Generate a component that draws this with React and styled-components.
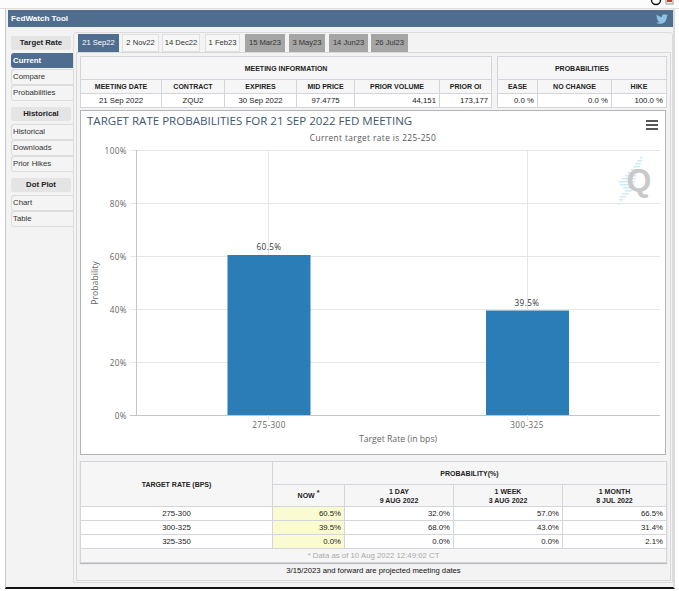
import React from "react";
import styled, { createGlobalStyle } from "styled-components";
import { FaTwitter } from "react-icons/fa";

const GlobalStyle = createGlobalStyle`
  html, body {
    margin: 0;
    padding: 0;
    background: #fff;
    font-family: "Liberation Sans", Arial, sans-serif;
  }
`;

const tabs = [
  { label: "21 Sep22", width: 41, gap: 3, state: "active" },
  { label: "2 Nov22", width: 37, gap: 3 },
  { label: "14 Dec22", width: 38, gap: 5 },
  { label: "1 Feb23", width: 35, gap: 5 },
  { label: "15 Mar23", width: 40, gap: 4, state: "projected" },
  { label: "3 May23", width: 36, gap: 4, state: "projected" },
  { label: "14 Jun23", width: 39, gap: 3, state: "projected" },
  { label: "26 Jul23", width: 37, gap: 0, state: "projected" },
];

const menu = [
  { title: "Target Rate", items: ["Current", "Compare", "Probabilities"] },
  { title: "Historical", items: ["Historical", "Downloads", "Prior Hikes"] },
  { title: "Dot Plot", items: ["Chart", "Table"] },
];

const rates = [
  ["275-300", "60.5%", "32.0%", "57.0%", "66.5%"],
  ["300-325", "39.5%", "68.0%", "43.0%", "31.4%"],
  ["325-350", "0.0%", "0.0%", "0.0%", "2.1%"],
];

const gridLines = [
  { y: 150, label: "100%" },
  { y: 203, label: "80%" },
  { y: 256, label: "60%" },
  { y: 309, label: "40%" },
  { y: 362, label: "20%" },
  { y: 415, label: "0%" },
];

const App = () => {
  return (
    <>
      <GlobalStyle />
      <TopStrip>
        <svg width="24" height="8" viewBox="0 0 24 8">
          <circle cx="6" cy="0" r="4.5" fill="none" stroke="#111" strokeWidth="1.4" />
          <rect x="16" y="-2" width="7" height="6" fill="#f4f4f4" stroke="#999" />
          <rect x="17" y="0" width="5" height="2" fill="#b5482a" />
        </svg>
      </TopStrip>
      <Frame>
        <Header>
          <span>FedWatch Tool</span>
          <FaTwitter size={12} color="#8ec3e6" />
        </Header>
        <Body>
          <Sidebar>
            {menu.map((group) => (
              <MenuGroup key={group.title}>
                <MenuTitle>{group.title}</MenuTitle>
                {group.items.map((item) => (
                  <MenuItem key={item} $active={item === "Current"}>
                    {item}
                  </MenuItem>
                ))}
              </MenuGroup>
            ))}
          </Sidebar>
          <Main>
            <TabRow>
              {tabs.map((tab) => (
                <Tab key={tab.label} $width={tab.width} $gap={tab.gap} $state={tab.state}>
                  {tab.label}
                </Tab>
              ))}
            </TabRow>
            <Panel>
              <InfoRow>
                <InfoTable $width={411}>
                  <colgroup>
                    <Col $width={81} />
                    <Col $width={63} />
                    <Col $width={72} />
                    <Col $width={58} />
                    <Col $width={85} />
                    <Col $width={52} />
                  </colgroup>
                  <tbody>
                    <tr>
                      <HeadCell colSpan={6} $height={23}>MEETING INFORMATION</HeadCell>
                    </tr>
                    <tr>
                      <HeadCell $height={14}>MEETING DATE</HeadCell>
                      <HeadCell>CONTRACT</HeadCell>
                      <HeadCell>EXPIRES</HeadCell>
                      <HeadCell>MID PRICE</HeadCell>
                      <HeadCell>PRIOR VOLUME</HeadCell>
                      <HeadCell>PRIOR OI</HeadCell>
                    </tr>
                    <tr>
                      <Cell $height={14}>21 Sep 2022</Cell>
                      <Cell>ZQU2</Cell>
                      <Cell>30 Sep 2022</Cell>
                      <Cell>97.4775</Cell>
                      <Cell $right>44,151</Cell>
                      <Cell $right>173,177</Cell>
                    </tr>
                  </tbody>
                </InfoTable>
                <InfoTable $width={169}>
                  <colgroup>
                    <Col $width={40} />
                    <Col $width={74} />
                    <Col $width={55} />
                  </colgroup>
                  <tbody>
                    <tr>
                      <HeadCell colSpan={3} $height={23}>PROBABILITIES</HeadCell>
                    </tr>
                    <tr>
                      <HeadCell $height={14}>EASE</HeadCell>
                      <HeadCell>NO CHANGE</HeadCell>
                      <HeadCell>HIKE</HeadCell>
                    </tr>
                    <tr>
                      <Cell $height={14} $right>0.0 %</Cell>
                      <Cell $right>0.0 %</Cell>
                      <Cell $right>100.0 %</Cell>
                    </tr>
                  </tbody>
                </InfoTable>
              </InfoRow>

              <ChartBox>
                <svg width="584" height="343" viewBox="81 111 584 343">
                  <ChartTitle x="87" y="125">TARGET RATE PROBABILITIES FOR 21 SEP 2022 FED MEETING</ChartTitle>
                  <ChartSubtitle x="373" y="141" textAnchor="middle">Current target rate is 225-250</ChartSubtitle>

                  <rect x="646" y="120" width="12" height="2" fill="#555" />
                  <rect x="646" y="124" width="12" height="2" fill="#555" />
                  <rect x="646" y="128" width="12" height="2" fill="#555" />

                  {gridLines.map((line) => (
                    <g key={line.label}>
                      <line x1="130" x2="660" y1={line.y + 0.5} y2={line.y + 0.5} stroke={line.y === 415 ? "#c4c4c4" : "#e6e6e6"} />
                      <AxisText x="127" y={line.y + 4} textAnchor="end">{line.label}</AxisText>
                    </g>
                  ))}
                  <line x1="136.5" x2="136.5" y1="150" y2="415" stroke="#c4c4c4" />
                  <line x1="268.5" x2="268.5" y1="150" y2="420" stroke="#e6e6e6" />
                  <line x1="527.5" x2="527.5" y1="150" y2="420" stroke="#e6e6e6" />

                  <g fill="#cdecf9">
                    <rect x="640" y="157" width="3" height="1.5" />
                    <rect x="637" y="160" width="5" height="1.5" />
                    <rect x="635" y="163" width="6" height="1.5" />
                    <rect x="633" y="166" width="7" height="1.5" />
                    <rect x="631" y="169" width="8" height="1.5" />
                    <rect x="628" y="172" width="10" height="1.5" />
                    <rect x="625" y="175" width="12" height="1.5" />
                    <rect x="622" y="178" width="14" height="1.5" />
                    <rect x="618" y="181" width="17" height="1.5" />
                    <rect x="620" y="184" width="14" height="1.5" />
                    <rect x="623" y="187" width="11" height="1.5" />
                    <rect x="625" y="190" width="7" height="1.5" />
                    <rect x="622" y="193" width="7" height="1.5" />
                    <rect x="620" y="196" width="6" height="1.5" />
                    <rect x="619" y="199" width="4" height="1.5" />
                    <rect x="617" y="203" width="3" height="1.5" />
                  </g>
                  <LogoLetter x="639" y="191" textAnchor="middle">Q</LogoLetter>

                  <rect x="227.5" y="255" width="83" height="160" fill="#2a7db6" />
                  <rect x="486" y="310.5" width="83" height="104.5" fill="#2a7db6" />
                  <AxisText x="269" y="250" textAnchor="middle" $dark>60.5%</AxisText>
                  <AxisText x="527" y="306" textAnchor="middle" $dark>39.5%</AxisText>

                  <AxisText x="269" y="428" textAnchor="middle">275-300</AxisText>
                  <AxisText x="527" y="428" textAnchor="middle">300-325</AxisText>
                  <AxisTitle x="398" y="442" textAnchor="middle">Target Rate (in bps)</AxisTitle>
                  <AxisTitle x="98" y="283" textAnchor="middle" transform="rotate(-90 98 283)">Probability</AxisTitle>
                </svg>
              </ChartBox>

              <RateTable $width={586}>
                <colgroup>
                  <Col $width={192} />
                  <Col $width={72} />
                  <Col $width={109} />
                  <Col $width={109} />
                  <Col $width={104} />
                </colgroup>
                <tbody>
                  <tr>
                    <HeadCell rowSpan={2}>TARGET RATE (BPS)</HeadCell>
                    <HeadCell colSpan={4} $height={23}>PROBABILITY(%)</HeadCell>
                  </tr>
                  <tr>
                    <HeadCell $height={22}>NOW <Star>*</Star></HeadCell>
                    <HeadCell>1 DAY<br />9 AUG 2022</HeadCell>
                    <HeadCell>1 WEEK<br />3 AUG 2022</HeadCell>
                    <HeadCell>1 MONTH<br />8 JUL 2022</HeadCell>
                  </tr>
                  {rates.map(([rate, now, day, week, month]) => (
                    <tr key={rate}>
                      <Cell $height={14}>{rate}</Cell>
                      <Cell $right $now>{now}</Cell>
                      <Cell $right>{day}</Cell>
                      <Cell $right>{week}</Cell>
                      <Cell $right>{month}</Cell>
                    </tr>
                  ))}
                  <tr>
                    <NoteCell colSpan={5}>* Data as of 10 Aug 2022 12:49:02 CT</NoteCell>
                  </tr>
                </tbody>
              </RateTable>
              <Footnote>3/15/2023 and forward are projected meeting dates</Footnote>
            </Panel>
          </Main>
        </Body>
      </Frame>
      <BottomStrip />
    </>
  );
};

const TopStrip = styled.div`
  height: 8px;
  display: flex;
  justify-content: flex-end;
  padding-right: 5px;
  background: #fcfcfc;
  border-bottom: 1px solid #dedede;
  overflow: hidden;
  svg {
    display: block;
  }
`;

const Frame = styled.div`
  width: 670px;
  height: 580px;
  margin-left: 5px;
  padding: 1px 0 0 2px;
  box-sizing: border-box;
  background: #f3f3f3;
  border-left: 1px solid #c8c8c8;
  border-right: 2px solid #dcdcdc;
  border-bottom: 2px solid #111;
`;

const Header = styled.div`
  height: 17px;
  display: flex;
  align-items: center;
  justify-content: space-between;
  padding: 0 5px 0 3px;
  background: #4f6d8f;
  color: #fff;
  font-size: 8.1px;
  font-weight: bold;
`;

const Body = styled.div`
  display: flex;
  padding: 5px 0 0 3px;
`;

const Sidebar = styled.div`
  width: 62px;
  padding-top: 4px;
  flex-shrink: 0;
`;

const MenuGroup = styled.div`
  margin-bottom: 7px;
`;

const MenuTitle = styled.div`
  width: 60px;
  height: 14px;
  margin-bottom: 3px;
  line-height: 14px;
  text-align: center;
  background: #e4e4e4;
  border-radius: 2px;
  color: #222;
  font-size: 7.8px;
  font-weight: bold;
`;

const MenuItem = styled.div`
  height: 15px;
  margin-bottom: 1px;
  padding-left: 2px;
  line-height: 15px;
  font-size: 7.8px;
  border-radius: 3px 0 0 3px;
  background: ${(p) => (p.$active ? "#4f6d8f" : "#f4f4f4")};
  color: ${(p) => (p.$active ? "#fff" : "#333")};
  font-weight: ${(p) => (p.$active ? "bold" : "normal")};
  box-shadow: ${(p) => (p.$active ? "none" : "inset 1px 1px 0 #dcdcdc, 0 1px 0 #dcdcdc")};
`;

const Main = styled.div`
  width: 600px;
  height: 551px;
  box-sizing: border-box;
  padding: 1px 1px 1px 2px;
  border: 1px solid #dcdcdc;
  border-radius: 3px 3px 0 0;
`;

const TabRow = styled.div`
  display: flex;
  height: 18px;
  padding-left: 2px;
`;

const Tab = styled.div`
  width: ${(p) => p.$width}px;
  margin-right: ${(p) => p.$gap}px;
  line-height: 18px;
  text-align: center;
  font-size: 7.6px;
  background: ${(p) =>
    p.$state === "active" ? "#4f6d8f" : p.$state === "projected" ? "#a5a5a5" : "#f7f7f7"};
  color: ${(p) => (p.$state === "active" ? "#fff" : "#333")};
  box-shadow: ${(p) => (p.$state ? "none" : "inset 0 0 0 1px #e0e0e0")};
`;

const Panel = styled.div`
  height: 529px;
  box-sizing: border-box;
  padding: 3px 3px 0 3px;
  border: 1px solid #d8d8d8;
`;

const InfoRow = styled.div`
  display: flex;
  justify-content: space-between;
  width: 587px;
`;

const InfoTable = styled.table`
  width: ${(p) => p.$width}px;
  table-layout: fixed;
  border-collapse: collapse;
`;

const RateTable = styled(InfoTable)`
  margin-top: 6px;
  box-shadow: 0 1px 1px #bbb;
`;

const Col = styled.col`
  width: ${(p) => p.$width}px;
`;

const HeadCell = styled.td`
  box-sizing: border-box;
  height: ${(p) => (p.$height ? `${p.$height}px` : "auto")};
  padding: 0;
  border: 1px solid #d4d4dc;
  background: #f6f6f6;
  color: #222;
  font-size: 7px;
  font-weight: bold;
  line-height: 9px;
  text-align: center;
`;

const Cell = styled.td`
  box-sizing: border-box;
  height: ${(p) => (p.$height ? `${p.$height}px` : "auto")};
  padding: 0 ${(p) => (p.$right ? "3px" : "0")} 0 0;
  border: 1px solid #d4d4dc;
  background: ${(p) => (p.$now ? "#fbfbd2" : "#fff")};
  color: #222;
  font-size: 7.8px;
  line-height: 1;
  text-align: ${(p) => (p.$right ? "right" : "center")};
`;

const NoteCell = styled.td`
  box-sizing: border-box;
  height: 14px;
  padding: 0;
  border: 1px solid #d4d4dc;
  background: #f6f6f6;
  color: #aaa;
  font-size: 7.8px;
  line-height: 1;
  text-align: center;
`;

const Star = styled.sup`
  font-size: 7px;
  line-height: 0;
`;

const ChartBox = styled.div`
  width: 584px;
  height: 343px;
  margin-top: 2px;
  background: #fff;
  border: 1px solid #b4b4b4;
  svg {
    display: block;
  }
`;

const ChartTitle = styled.text`
  fill: #3e576f;
  font-family: "Open Sans", sans-serif;
  font-size: 11.55px;
`;

const ChartSubtitle = styled.text`
  fill: #555;
  font-family: "Open Sans", sans-serif;
  font-size: 8.3px;
  letter-spacing: 0.4px;
`;

const AxisText = styled.text`
  fill: ${(p) => (p.$dark ? "#333" : "#666")};
  font-family: "Open Sans", sans-serif;
  font-size: 8.2px;
  letter-spacing: 0.4px;
`;

const AxisTitle = styled.text`
  fill: #666;
  font-family: "Open Sans", sans-serif;
  font-size: 8.7px;
  letter-spacing: 0;
`;

const LogoLetter = styled.text`
  fill: #c9c9c9;
  font-family: "Liberation Sans", sans-serif;
  font-size: 32px;
  font-weight: bold;
`;

const Footnote = styled.div`
  margin-top: 3px;
  text-align: center;
  color: #111;
  font-size: 7.7px;
`;

const BottomStrip = styled.div`
  height: 2px;
  background: #fff;
`;

export default App;
